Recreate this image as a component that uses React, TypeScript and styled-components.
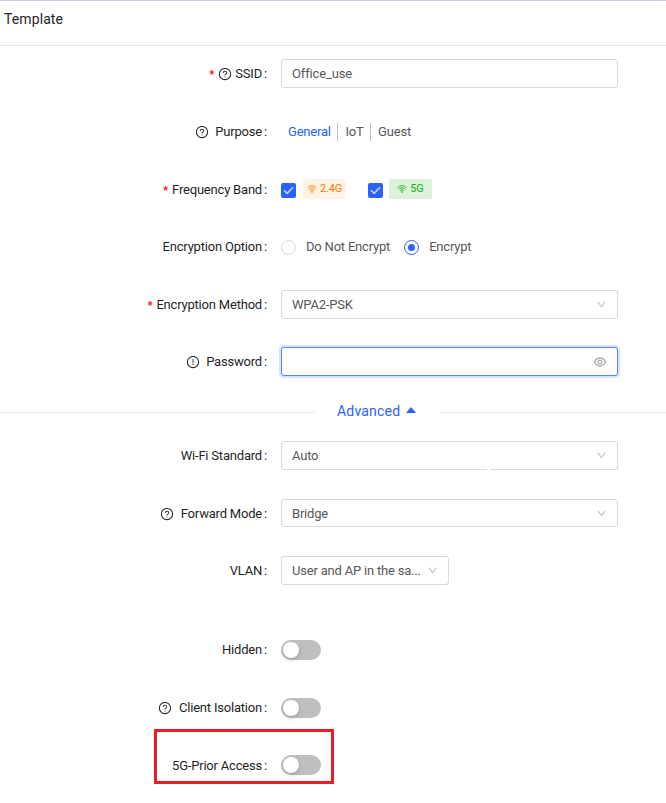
import React from 'react';
import styled, { createGlobalStyle, css } from 'styled-components';
import {
  AiOutlineDown,
  AiOutlineExclamationCircle,
  AiOutlineEye,
  AiOutlineQuestionCircle,
} from 'react-icons/ai';

const GlobalStyle = createGlobalStyle`
  *, *::before, *::after { box-sizing: border-box; }
  body {
    margin: 0;
    background: #fff;
    font-family: Roboto, "Liberation Sans", sans-serif;
    font-size: 13px;
    letter-spacing: -0.2px;
    color: #575757;
  }
`;

const Page = styled.main`
  height: 803px;
  overflow: hidden;
`;

const Header = styled.header`
  height: 46px;
  padding: 8px 4px 0;
  border-top: 1px solid #c3cde0;
  border-bottom: 1px solid #e6e6e6;
`;

const Title = styled.h1`
  margin: 0;
  font-size: 14px;
  line-height: 20px;
  font-weight: 400;
  letter-spacing: 0.1px;
  color: #262626;
`;

const Row = styled.div<{ $gap: number; $height?: number }>`
  position: relative;
  display: grid;
  grid-template-columns: 267px 1fr;
  column-gap: 14px;
  align-items: center;
  height: ${(p) => p.$height ?? 29}px;
  margin-top: ${(p) => p.$gap}px;
`;

const Label = styled.div<{ $drop: number }>`
  display: flex;
  justify-content: flex-end;
  align-items: center;
  padding-top: ${(p) => p.$drop * 2}px;
  line-height: 20px;
  letter-spacing: -0.2px;
  color: #1f1f1f;
  white-space: nowrap;
`;

const Colon = styled.span`
  width: 3px;
  margin-left: 2px;
`;

const Required = styled.span`
  width: 7px;
  margin-right: 3px;
  font: bold 12px/12px "Liberation Mono", monospace;
  color: #fa1e30;
  transform: translateY(2px);
`;

const Hint = styled.span<{ $space: number }>`
  display: flex;
  margin-right: ${(p) => p.$space}px;
  font-size: 14px;
  color: #262626;
`;

const fieldBox = css`
  display: flex;
  align-items: center;
  height: 29px;
  border: 1px solid #d9d9d9;
  border-radius: 3px;
  background: #fff;
`;

const Input = styled.input`
  ${fieldBox}
  width: 337px;
  padding: 0 10px;
  font: inherit;
  letter-spacing: -0.14px;
  color: inherit;
  outline: none;
`;

const PasswordBox = styled.div`
  ${fieldBox}
  width: 337px;
  padding-right: 10px;
  border-color: #4f86ff;
  box-shadow: 0 0 0 2px rgba(41, 98, 255, 0.18);
  color: #8c8c8c;
  font-size: 14px;
`;

const PasswordInput = styled.input`
  flex: 1;
  min-width: 0;
  height: 25px;
  padding: 0 10px;
  border: 0;
  outline: none;
  background: transparent;
`;

const SelectBox = styled.div<{ $width?: number; $height?: number }>`
  ${fieldBox}
  width: ${(p) => p.$width ?? 337}px;
  height: ${(p) => p.$height ?? 29}px;
  padding: 0 10px;
  justify-content: space-between;
  white-space: nowrap;

  svg {
    width: 11px;
    height: 11px;
    color: #b5b5b5;
  }
`;

const Tabs = styled.div`
  display: flex;
  align-items: center;
`;

const Tab = styled.span<{ $active?: boolean }>`
  padding: 0 6.6px 0 7px;
  line-height: 18px;
  color: ${(p) => (p.$active ? '#2962ff' : 'inherit')};

  & + & {
    border-left: 1px solid #bfbfbf;
  }
`;

const Options = styled.div`
  display: flex;
  align-items: center;
`;

const Check = styled.span`
  display: flex;
  align-items: center;
  justify-content: center;
  width: 15px;
  height: 15px;
  margin-top: 2px;
  border-radius: 2px;
  background: #2962ff;
`;

const Band = styled.span<{ $tone: 'orange' | 'green' }>`
  display: flex;
  align-items: center;
  justify-content: center;
  gap: 3px;
  width: 43px;
  height: 20px;
  margin: -2px 22px 0 7px;
  border-radius: 2px;
  font-size: 11px;
  color: ${(p) => (p.$tone === 'orange' ? '#f57c00' : '#16b116')};
  background: ${(p) => (p.$tone === 'orange' ? '#fff3e5' : '#dcf2d9')};

  & + ${Check} + & {
    margin-left: 6px;
  }
`;

const Radio = styled.span<{ $checked?: boolean }>`
  display: flex;
  align-items: center;
  justify-content: center;
  width: 15px;
  height: 15px;
  margin-right: 10px;
  margin-top: 1px;
  border: 1px solid ${(p) => (p.$checked ? '#2962ff' : '#d9d9d9')};
  border-radius: 50%;

  &::after {
    content: '';
    width: 7px;
    height: 7px;
    border-radius: 50%;
    background: ${(p) => (p.$checked ? '#2962ff' : 'transparent')};
  }
`;

const RadioText = styled.span`
  margin-right: 14px;
`;

const Advanced = styled.div`
  display: flex;
  align-items: center;
  height: 20px;
  margin-top: 25px;

  &::before,
  &::after {
    content: '';
    height: 1px;
    background: #e8e8e8;
    transform: translateY(1px);
  }
  &::before { width: 315px; }
  &::after { flex: 1; }
`;

const AdvancedToggle = styled.button`
  display: flex;
  align-items: center;
  width: 125px;
  padding: 0 0 0 22px;
  border: 0;
  background: none;
  font: inherit;
  font-size: 14px;
  line-height: 20px;
  letter-spacing: 0.2px;
  color: #2962ff;

  svg { margin: -2px 0 0 6px; }
`;

const Switch = styled.button`
  display: flex;
  align-items: center;
  width: 40px;
  height: 20px;
  padding: 0 2px;
  border: 0;
  border-radius: 10px;
  background: #bfbfbf;

  &::before {
    content: '';
    width: 16px;
    height: 16px;
    border-radius: 50%;
    background: #fff;
    box-shadow: 0 2px 4px rgba(0, 35, 11, 0.2);
  }
`;

const Highlight = styled.div`
  position: absolute;
  left: 154px;
  top: -21px;
  width: 180px;
  height: 55px;
  border: 3px solid #ed1c24;
`;

const LineBreak = styled.i`
  position: absolute;
  left: 487px;
  bottom: 0;
  width: 3px;
  height: 1px;
  background: #fff;
`;

type FieldProps = {
  label: string;
  gap: number;
  height?: number;
  required?: boolean;
  hint?: 'help' | 'alert';
  hintSpace?: number;
  labelDrop?: number;
  children: React.ReactNode;
};

const Field = ({
  label,
  gap,
  height,
  required,
  hint,
  hintSpace = 7,
  labelDrop = 0,
  children,
}: FieldProps) => (
  <Row $gap={gap} $height={height}>
    <Label $drop={labelDrop}>
      {required && <Required>*</Required>}
      {hint && (
        <Hint $space={hintSpace}>
          {hint === 'help' ? <AiOutlineQuestionCircle /> : <AiOutlineExclamationCircle />}
        </Hint>
      )}
      {label}
      <Colon>:</Colon>
    </Label>
    {children}
  </Row>
);

const Select = ({ value, width, height }: { value: string; width?: number; height?: number }) => (
  <SelectBox $width={width} $height={height}>
    {value}
    <AiOutlineDown />
  </SelectBox>
);

const Tick = () => (
  <Check>
    <svg width="11" height="9" viewBox="0 0 11 9" fill="none" stroke="#c3d2ff" strokeWidth="1.6">
      <path d="M1 4.2 4.2 7.4 10 1.3" />
    </svg>
  </Check>
);

const Wifi = () => (
  <svg width="10" height="8" viewBox="0 0 10 8" fill="none" stroke="currentColor" strokeWidth="0.9">
    <path d="M.4 2.7C3 .1 7 .1 9.6 2.7M1.8 4.2C3.6 2.3 6.4 2.3 8.2 4.2M3.1 5.6C4.2 4.5 5.8 4.5 6.9 5.6" />
    <circle cx="5" cy="6.9" r=".8" fill="currentColor" stroke="none" />
  </svg>
);

export default function App() {
  return (
    <Page>
      <GlobalStyle />
      <Header>
        <Title>Template</Title>
      </Header>
      <Field label="SSID" gap={13} required hint="help" hintSpace={3}>
        <Input defaultValue="Office_use" />
      </Field>
      <Field label="Purpose" gap={29} hint="help" hintSpace={6}>
        <Tabs>
          <Tab $active>General</Tab>
          <Tab>IoT</Tab>
          <Tab>Guest</Tab>
        </Tabs>
      </Field>
      <Field label="Frequency Band" gap={29} required>
        <Options>
          <Tick />
          <Band $tone="orange"><Wifi />2.4G</Band>
          <Tick />
          <Band $tone="green"><Wifi />5G</Band>
        </Options>
      </Field>
      <Field label="Encryption Option" gap={28}>
        <Options>
          <Radio />
          <RadioText>Do Not Encrypt</RadioText>
          <Radio $checked />
          <RadioText>Encrypt</RadioText>
        </Options>
      </Field>
      <Field label="Encryption Method" gap={29} required>
        <Select value="WPA2-PSK" />
      </Field>
      <Field label="Password" gap={28} hint="alert" hintSpace={6}>
        <PasswordBox>
          <PasswordInput type="password" />
          <AiOutlineEye />
        </PasswordBox>
      </Field>
      <Advanced>
        <AdvancedToggle>
          Advanced
          <svg width="10" height="6" viewBox="0 0 10 6" fill="currentColor">
            <path d="M5 0 10 6H0z" />
          </svg>
        </AdvancedToggle>
      </Advanced>
      <Field label="Wi-Fi Standard" gap={20}>
        <Select value="Auto" />
        <LineBreak />
      </Field>
      <Field label="Forward Mode" gap={29} height={28} hint="help" labelDrop={1}>
        <Select value="Bridge" height={28} />
      </Field>
      <Field label="VLAN" gap={29}>
        <Select value="User and AP in the sa..." width={168} />
      </Field>
      <Field label="Hidden" gap={50} height={30}>
        <Switch />
      </Field>
      <Field label="Client Isolation" gap={28} height={30} hint="help">
        <Switch />
      </Field>
      <Field label="5G-Prior Access" gap={27} height={30} labelDrop={1}>
        <Switch />
        <Highlight />
      </Field>
    </Page>
  );
}
